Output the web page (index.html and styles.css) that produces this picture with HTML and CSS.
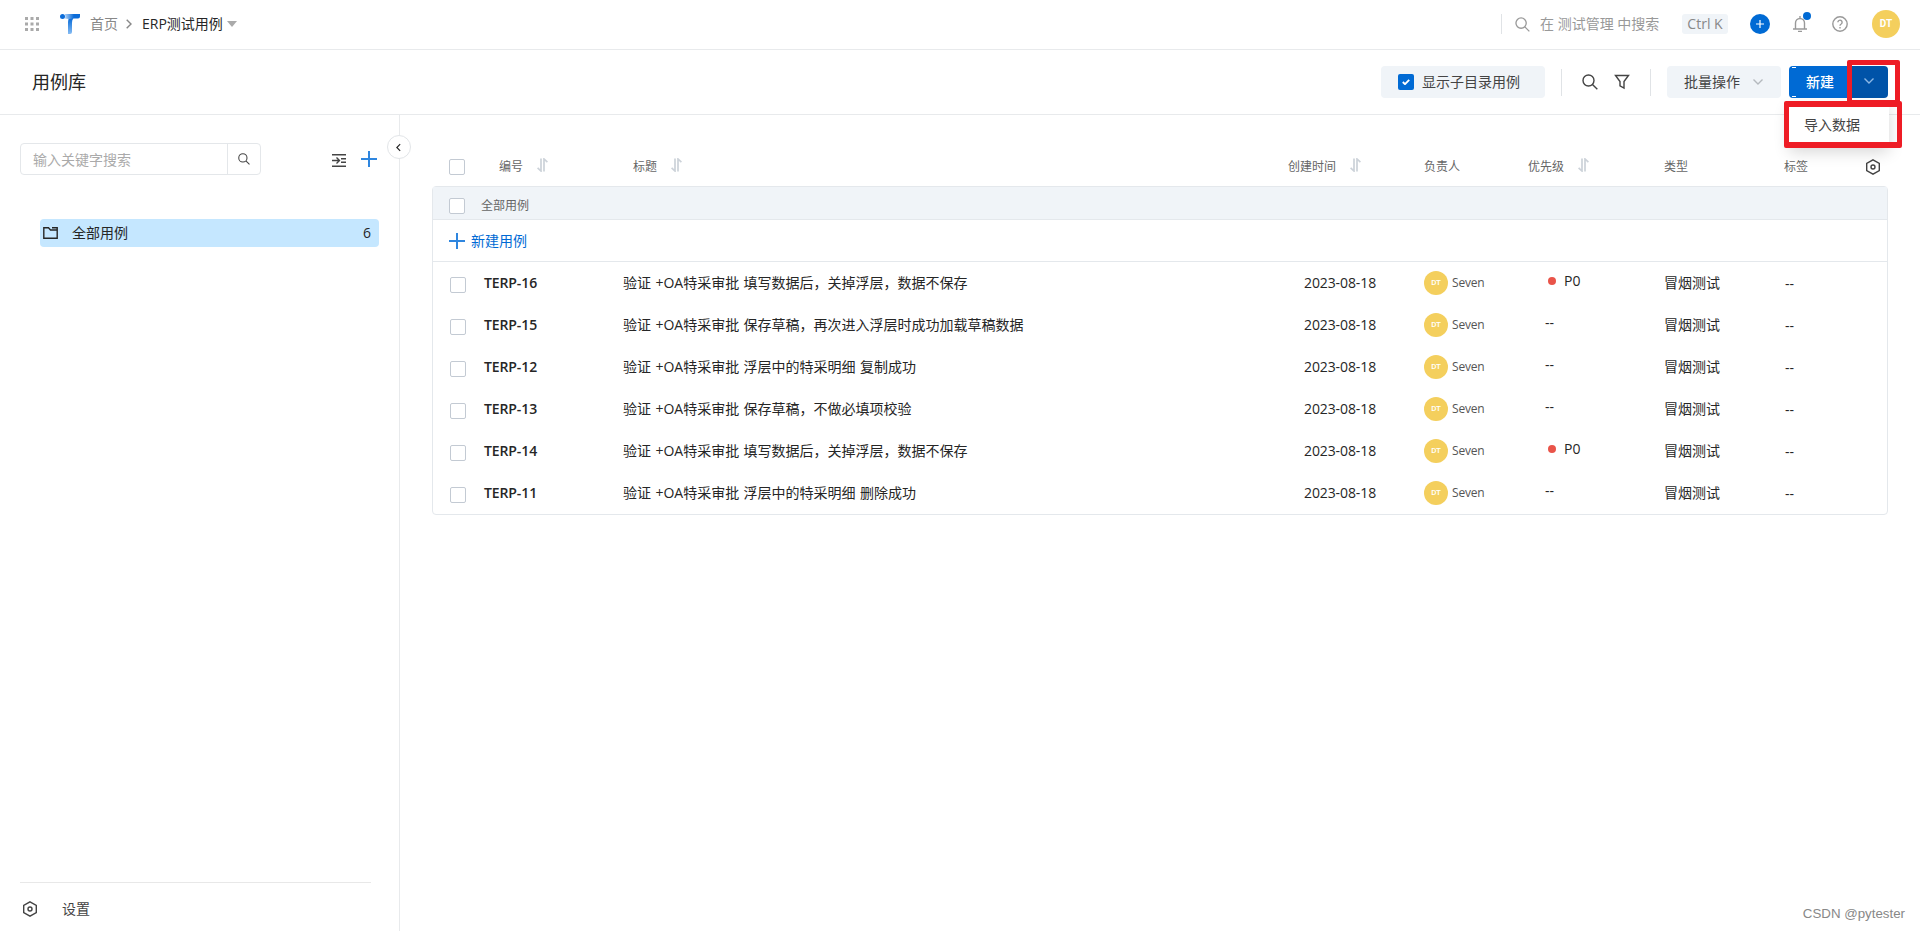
FILE: index.html
```html
<!DOCTYPE html>
<html lang="zh-CN">
  <head>
    <meta charset="UTF-8" />
    <meta name="viewport" content="width=device-width, initial-scale=1.0" />
    <title>用例库</title>
    <link rel="stylesheet" href="styles.css" />
  </head>
  <body>
    <!-- Shared icons -->
    <svg class="sprite">
      <symbol id="i-search" viewBox="0 0 16 16">
        <circle cx="6.5" cy="6.5" r="5.5" />
        <path d="M10.5 10.5 15.3 15.3" />
      </symbol>
      <symbol id="i-sort" viewBox="0 0 11 14">
        <path d="M4 .5V13L.6 9.800M7 13.500V1L10.400 4.200" stroke-width="1.700" />
      </symbol>
      <symbol id="i-gear" viewBox="0 0 16 16">
        <path d="M8 .8 14.3 4.3V11.7L8 15.2 1.7 11.7V4.3Z" />
        <circle cx="8" cy="8" r="2" />
      </symbol>
      <symbol id="i-plus" viewBox="0 0 16 16">
        <path d="M8 0V16M0 8H16" />
      </symbol>
      <symbol id="i-down" viewBox="0 0 10 6">
        <path d="M.5 .5 5 5 9.5 .5" />
      </symbol>
    </svg>

    <!-- Top navigation -->
    <header class="topbar">
      <svg class="apps" viewBox="0 0 14 14">
        <path d="M0 0h3v3H0zM5.5 0h3v3h-3zM11 0h3v3h-3zM0 5.5h3v3H0zM5.5 5.5h3v3h-3zM11 5.5h3v3h-3zM0 11h3v3H0zM5.5 11h3v3h-3zM11 11h3v3h-3z" />
      </svg>
      <svg class="logo" viewBox="0 0 20 20">
        <defs>
          <linearGradient id="stem" x1="0" y1="0" x2="0" y2="1">
            <stop offset="0.2" stop-color="#1272db" />
            <stop offset="1" stop-color="#86bcf3" />
          </linearGradient>
          <linearGradient id="bar" x1="0" y1="0" x2="1" y2="0">
            <stop offset="0" stop-color="#b5d5f7" />
            <stop offset="0.6" stop-color="#0b6cd9" />
          </linearGradient>
        </defs>
        <circle cx="2.5" cy="2.5" r="2.5" fill="#0b6cd9" />
        <path d="M8 20V8q0-6 6-6l-1 3q-1 1-1 4v9q0 2-2 2z" fill="url(#stem)" />
        <path d="M4.500 0H20v2.500q0 2-2 2h-4L9 5Q7 4.500 5 4.500 6 2 4.500 0z" fill="url(#bar)" />
      </svg>
      <a class="crumb">首页</a>
      <svg class="crumb-sep" viewBox="0 0 6 10"><path d="M.7 .7 5 5 .7 9.3" /></svg>
      <span class="crumb current">ERP测试用例</span>
      <i class="caret"></i>

      <div class="top-right">
        <i class="split"></i>
        <svg class="top-search"><use href="#i-search" /></svg>
        <span class="hint">在 测试管理 中搜索</span>
        <kbd>Ctrl K</kbd>
        <span class="add-round"><svg><use href="#i-plus" /></svg></span>
        <span class="bell">
          <svg viewBox="0 0 14 16">
            <path d="M0 13H14M2.5 13V7a4.5 4.5 0 0 1 9 0V13M7 0V2.5M5 15.4H9" />
          </svg>
          <i class="dot"></i>
        </span>
        <svg class="help" viewBox="0 0 16 16">
          <circle cx="8" cy="8" r="7.2" />
          <path d="M5.9 6.3a2.1 2.1 0 1 1 3.3 1.7Q8 8.700 8 9.800M8 11.100V12.400" />
        </svg>
        <span class="avatar large">DT</span>
      </div>
    </header>

    <!-- Page toolbar -->
    <div class="toolbar">
      <h1>用例库</h1>
      <div class="tools">
        <label class="toggle">
          <span class="checked"><svg viewBox="0 0 8 6"><path d="M.8 3 3 5.2 7.2 .8" /></svg></span>
          显示子目录用例
        </label>
        <i class="split first"></i>
        <svg class="tool-icon"><use href="#i-search" /></svg>
        <svg class="tool-icon filter" viewBox="0 0 16 16">
          <path d="M1.5 1.5H14.5L10 7.5V14L6 11.8V7.5Z" />
        </svg>
        <i class="split second"></i>
        <button class="batch">批量操作 <svg><use href="#i-down" /></svg></button>
        <div class="create">
          <button class="create-main">新建</button>
          <button class="create-more"><svg><use href="#i-down" /></svg></button>
          <div class="menu">导入数据</div>
          <i class="mark mark-arrow"></i>
          <i class="mark mark-menu"></i>
        </div>
      </div>
    </div>

    <div class="main">
      <!-- Sidebar -->
      <aside class="sidebar">
        <span class="collapse"><svg viewBox="0 0 6 10"><path d="M5 1 1 5 5 9" /></svg></span>
        <div class="side-tools">
          <div class="search-box">
            <span class="placeholder">输入关键字搜索</span>
            <span class="search-btn"><svg><use href="#i-search" /></svg></span>
          </div>
          <svg class="indent" viewBox="0 0 14 13">
            <path d="M0 .7H14M0 12.3H14M0 6.5H7M4.5 3.5 7.5 6.5 4.5 9.5M9 4.7H14M9 8.3H14" />
          </svg>
          <svg class="side-plus"><use href="#i-plus" /></svg>
        </div>
        <div class="folder">
          <svg viewBox="0 0 15 12">
            <path d="M.8 .8H5.5L7.5 3H14.2V11.2H.8ZM9 .8H14.2V3" />
          </svg>
          <span>全部用例</span>
          <span class="count">6</span>
        </div>
        <div class="settings">
          <svg><use href="#i-gear" /></svg>
          <span>设置</span>
        </div>
      </aside>

      <!-- Case list -->
      <section class="content">
        <div class="row head">
          <i class="box"></i>
          <span class="c-id">编号 <svg><use href="#i-sort" /></svg></span>
          <span class="c-title">标题 <svg><use href="#i-sort" /></svg></span>
          <span class="c-date">创建时间 <svg><use href="#i-sort" /></svg></span>
          <span class="c-owner">负责人</span>
          <span class="c-level">优先级 <svg><use href="#i-sort" /></svg></span>
          <span class="c-type">类型</span>
          <span class="c-tag">标签</span>
          <svg class="gear"><use href="#i-gear" /></svg>
        </div>
        <div class="table">
          <div class="group"><i class="box"></i>全部用例</div>
          <div class="new-case"><svg><use href="#i-plus" /></svg>新建用例</div>
          <div class="row">
            <i class="box"></i>
            <span class="c-id">TERP-16</span>
            <span class="c-title">验证 +OA特采审批 填写数据后，关掉浮层，数据不保存</span>
            <span class="c-date">2023-08-18</span>
            <span class="c-owner"><b class="avatar">DT</b>Seven</span>
            <span class="c-level"><i class="p0"></i>P0</span>
            <span class="c-type">冒烟测试</span>
            <span class="c-tag">--</span>
          </div>
          <div class="row">
            <i class="box"></i>
            <span class="c-id">TERP-15</span>
            <span class="c-title">验证 +OA特采审批 保存草稿，再次进入浮层时成功加载草稿数据</span>
            <span class="c-date">2023-08-18</span>
            <span class="c-owner"><b class="avatar">DT</b>Seven</span>
            <span class="c-level">--</span>
            <span class="c-type">冒烟测试</span>
            <span class="c-tag">--</span>
          </div>
          <div class="row">
            <i class="box"></i>
            <span class="c-id">TERP-12</span>
            <span class="c-title">验证 +OA特采审批 浮层中的特采明细 复制成功</span>
            <span class="c-date">2023-08-18</span>
            <span class="c-owner"><b class="avatar">DT</b>Seven</span>
            <span class="c-level">--</span>
            <span class="c-type">冒烟测试</span>
            <span class="c-tag">--</span>
          </div>
          <div class="row">
            <i class="box"></i>
            <span class="c-id">TERP-13</span>
            <span class="c-title">验证 +OA特采审批 保存草稿，不做必填项校验</span>
            <span class="c-date">2023-08-18</span>
            <span class="c-owner"><b class="avatar">DT</b>Seven</span>
            <span class="c-level">--</span>
            <span class="c-type">冒烟测试</span>
            <span class="c-tag">--</span>
          </div>
          <div class="row">
            <i class="box"></i>
            <span class="c-id">TERP-14</span>
            <span class="c-title">验证 +OA特采审批 填写数据后，关掉浮层，数据不保存</span>
            <span class="c-date">2023-08-18</span>
            <span class="c-owner"><b class="avatar">DT</b>Seven</span>
            <span class="c-level"><i class="p0"></i>P0</span>
            <span class="c-type">冒烟测试</span>
            <span class="c-tag">--</span>
          </div>
          <div class="row">
            <i class="box"></i>
            <span class="c-id">TERP-11</span>
            <span class="c-title">验证 +OA特采审批 浮层中的特采明细 删除成功</span>
            <span class="c-date">2023-08-18</span>
            <span class="c-owner"><b class="avatar">DT</b>Seven</span>
            <span class="c-level">--</span>
            <span class="c-type">冒烟测试</span>
            <span class="c-tag">--</span>
          </div>
        </div>
      </section>
    </div>
    <div class="watermark">CSDN @pytester</div>
  </body>
</html>
```
FILE: styles.css
```css
/* Base */
* {
  margin: 0;
  padding: 0;
  box-sizing: border-box;
}

body {
  height: 100vh;
  display: flex;
  flex-direction: column;
  overflow: hidden;
  background: #fff;
  color: #262626;
  font-family: "Open Sans", "Noto Sans CJK SC", sans-serif;
  font-size: 14px;
  line-height: 20px;
}

svg {
  flex: none;
  fill: none;
  stroke: currentColor;
  stroke-width: 1.4;
}

i {
  flex: none;
  font-style: normal;
}

button {
  border: none;
  font: inherit;
  color: inherit;
}

.sprite {
  position: absolute;
  width: 0;
  height: 0;
}

/* Top navigation */
.topbar {
  height: 50px;
  flex: none;
  display: flex;
  align-items: center;
  padding: 0 20px 1px 25px;
  border-bottom: 1px solid #e8eaec;
}

.apps {
  width: 14px;
  height: 14px;
  fill: #aaa;
  stroke: none;
}

.logo {
  width: 20px;
  height: 20px;
  margin-left: 21px;
  stroke: none;
}

.crumb {
  margin-left: 10px;
  color: #888;
}

.crumb.current {
  color: #262626;
}

.crumb-sep {
  width: 6px;
  height: 10px;
  margin-left: 8px;
  color: #888;
}

.caret {
  margin-left: 4px;
  border: 5px solid transparent;
  border-top: 6px solid #aaa;
  border-bottom: 0;
}

.top-right {
  margin-left: auto;
  display: flex;
  align-items: center;
  color: #999;
}

.split {
  width: 1px;
  height: 20px;
  background: #e0e3e6;
}

.top-search {
  width: 15px;
  height: 15px;
  margin-left: 13px;
}

.hint {
  width: 152px;
  padding-left: 10px;
  white-space: nowrap;
}

kbd {
  width: 46px;
  height: 20px;
  border-radius: 3px;
  background: #f0f4f8;
  color: #888;
  font: inherit;
  text-align: center;
}

.add-round {
  width: 20px;
  height: 20px;
  margin-left: 22px;
  display: flex;
  align-items: center;
  justify-content: center;
  border-radius: 50%;
  background: #006ad4;
  color: #fff;
}

.add-round svg {
  width: 8px;
  height: 8px;
  stroke-width: 2.4;
}

.bell {
  position: relative;
  height: 16px;
  margin-left: 23px;
}

.bell svg {
  display: block;
  width: 14px;
  height: 16px;
}

.dot {
  position: absolute;
  top: -4px;
  right: -4px;
  width: 8px;
  height: 8px;
  border-radius: 50%;
  background: #006ad4;
}

.help {
  width: 16px;
  height: 16px;
  margin-left: 25px;
}

.avatar {
  width: 24px;
  height: 24px;
  flex: none;
  display: flex;
  align-items: center;
  justify-content: center;
  border-radius: 50%;
  background: #f4cf5d;
  color: #fff;
  font-family: Roboto, sans-serif;
  font-size: 8px;
  font-weight: 500;
}

.avatar.large {
  width: 28px;
  height: 28px;
  margin-left: 24px;
  font-size: 10px;
  font-weight: 700;
}

/* Page toolbar */
.toolbar {
  height: 65px;
  flex: none;
  display: flex;
  align-items: center;
  justify-content: space-between;
  padding: 0 32px;
  border-bottom: 1px solid #e8eaec;
}

h1 {
  font-size: 18px;
  font-weight: 400;
}

.tools {
  display: flex;
  align-items: center;
  color: #444;
}

.toggle {
  width: 164px;
  height: 32px;
  display: flex;
  align-items: center;
  gap: 8px;
  padding-left: 17px;
  border-radius: 4px;
  background: #f0f4f8;
}

.checked {
  width: 16px;
  height: 16px;
  display: flex;
  align-items: center;
  justify-content: center;
  border-radius: 2px;
  background: #006ad4;
  color: #fff;
}

.checked svg {
  width: 8px;
  height: 6px;
  stroke-width: 1.8;
}

.tools .split {
  height: 27px;
}

.split.first {
  margin: 0 20px 0 16px;
}

.split.second {
  margin: 0 16px 0 20px;
}

.tool-icon {
  width: 16px;
  height: 16px;
}

.tool-icon.filter {
  margin-left: 16px;
}

.batch {
  width: 114px;
  height: 32px;
  display: flex;
  align-items: center;
  gap: 13px;
  padding-left: 17px;
  border-radius: 4px;
  background: #f0f4f8;
}

.batch svg,
.create svg {
  width: 10px;
  height: 6px;
  color: #b4b9be;
}

.create {
  position: relative;
  height: 32px;
  display: flex;
  margin-left: 8px;
}

.create-main {
  width: 63px;
  padding-right: 18px;
  border-radius: 4px 0 0 4px;
  background: #006ad4;
  color: #fff;
  text-align: right;
  font-weight: 500;
}

/* Light ticks at the rounded corners of the button */
.create-main::before,
.create-main::after {
  content: "";
  position: absolute;
  left: 3px;
  width: 4px;
  height: 1px;
  background: #fff;
}

.create-main::before {
  top: 1px;
}

.create-main::after {
  bottom: 1px;
}

.create-more {
  width: 36px;
  display: flex;
  align-items: center;
  justify-content: center;
  padding: 0 2px 2px 0;
  border-radius: 0 4px 4px 0;
  background: #0053a8;
}

.create-more svg {
  color: #8cb8e6;
}

.menu {
  position: absolute;
  top: 36px;
  left: 0;
  width: 100px;
  height: 44px;
  padding: 13px 15px;
  background: #fff;
  box-shadow: 0 6px 16px rgba(0, 0, 0, 0.16);
}

/* Red frames round the import entry */
.mark {
  position: absolute;
  border: 5px solid #ee1c25;
  border-radius: 2px;
}

.mark-arrow {
  top: -6px;
  left: 58px;
  width: 53px;
  height: 45px;
}

.mark-menu {
  top: 35px;
  left: -5px;
  width: 118px;
  height: 47px;
  border-width: 6px 5px;
}

/* Sidebar */
.main {
  flex: 1;
  display: flex;
  min-height: 0;
}

.sidebar {
  position: relative;
  width: 400px;
  flex: none;
  display: flex;
  flex-direction: column;
  padding: 28px 20px 0;
  border-right: 1px solid #e8eaec;
}

.collapse {
  position: absolute;
  top: 20px;
  right: -12px;
  width: 24px;
  height: 24px;
  display: flex;
  align-items: center;
  justify-content: center;
  padding-right: 1px;
  border: 1px solid #e2e5e8;
  border-radius: 50%;
  background: #fff;
}

.collapse svg {
  width: 5px;
  height: 9px;
}

.side-tools {
  display: flex;
  align-items: center;
}

.search-box {
  width: 241px;
  height: 32px;
  display: flex;
  border: 1px solid #e4e7ea;
  border-radius: 4px;
}

.placeholder {
  flex: 1;
  padding: 6px 12px;
  color: #aaa;
}

.search-btn {
  width: 33px;
  display: flex;
  align-items: center;
  justify-content: center;
  border-left: 1px solid #e4e7ea;
  color: #444;
}

.search-btn svg {
  width: 12px;
  height: 12px;
}

.indent {
  width: 14px;
  height: 13px;
  margin: 3px 0 0 71px;
  color: #444;
}

.side-plus {
  width: 16px;
  height: 16px;
  margin-left: 15px;
  color: #2f86df;
  stroke-width: 2;
}

.folder {
  height: 28px;
  width: 339px;
  display: flex;
  align-items: center;
  margin: 44px 0 0 20px;
  padding: 0 8px 0 3px;
  border-radius: 4px;
  background: #c5e7ff;
}

.folder svg {
  width: 15px;
  height: 12px;
  margin-right: 14px;
}

.count {
  margin-left: auto;
}

.settings {
  width: 351px;
  height: 49px;
  display: flex;
  align-items: center;
  gap: 24px;
  margin-top: auto;
  padding: 4px 2px 0;
  border-top: 1px solid #e8e8e8;
  color: #444;
}

.settings svg {
  width: 16px;
  height: 16px;
}

/* Case list */
.content {
  flex: 1;
  padding: 31px 32px 0;
}

.row {
  height: 42px;
  display: flex;
  align-items: center;
  white-space: nowrap;
}

.box {
  width: 16px;
  height: 16px;
  border: 1px solid #c3cad3;
  border-radius: 2px;
  background: #fff;
}

.row .box {
  margin: 4px 18px 0 17px;
}

.row .c-id {
  width: 139px;
  font-weight: 600;
  letter-spacing: -0.1px;
}

.row .c-title {
  width: 681px;
  word-spacing: 0.8px;
}

.row .c-date {
  width: 120px;
  letter-spacing: -0.1px;
}

.row .c-owner {
  width: 121px;
  display: flex;
  align-items: center;
  gap: 4px;
  color: #555;
  font-size: 12px;
  letter-spacing: -0.2px;
}

.row .c-level {
  width: 119px;
  display: flex;
  align-items: center;
  gap: 8px;
  padding-bottom: 4px;
}

.row .c-type {
  width: 121px;
}

.row .c-tag {
  padding-top: 2px;
}

.p0 {
  width: 8px;
  height: 8px;
  margin-left: 3px;
  border-radius: 50%;
  background: #e95449;
}

.row.head {
  height: 40px;
  color: #666;
  font-size: 12px;
}

.row.head .box {
  margin: 2px 34px 0 17px;
}

.row.head span {
  display: flex;
  align-items: center;
  gap: 14px;
  padding: 2px 0 0;
  font-weight: 400;
  letter-spacing: 0;
}

.row.head span svg {
  width: 11px;
  height: 14px;
  margin-top: -4px;
  color: #ccd2d9;
}

.row.head .c-id {
  width: 134px;
}

.row.head .c-title {
  width: 655px;
}

.row.head .c-date {
  width: 136px;
}

.row.head .c-owner {
  width: 104px;
  color: #666;
}

.row.head .c-level {
  width: 136px;
}

.row.head .c-type {
  width: 120px;
}

.row.head .gear {
  width: 16px;
  height: 16px;
  margin: 2px 7px 0 auto;
  color: #444;
}

.table {
  border: 1px solid #e4e8ec;
  border-radius: 4px;
}

.group {
  height: 33px;
  display: flex;
  align-items: center;
  gap: 16px;
  padding: 5px 16px 0;
  background: #f0f4f8;
  border-bottom: 1px solid #e4e8ec;
  color: #666;
  font-size: 12px;
}

.new-case {
  height: 42px;
  display: flex;
  align-items: center;
  gap: 6px;
  padding: 0 16px;
  border-bottom: 1px solid #e4e8ec;
  color: #006ad4;
}

.new-case svg {
  width: 16px;
  height: 16px;
  color: #2f86df;
  stroke-width: 2;
}

.watermark {
  position: absolute;
  right: 15px;
  bottom: 7px;
  color: #888;
  font-family: "Liberation Sans", Arial, sans-serif;
  font-size: 13.3px;
}
```
